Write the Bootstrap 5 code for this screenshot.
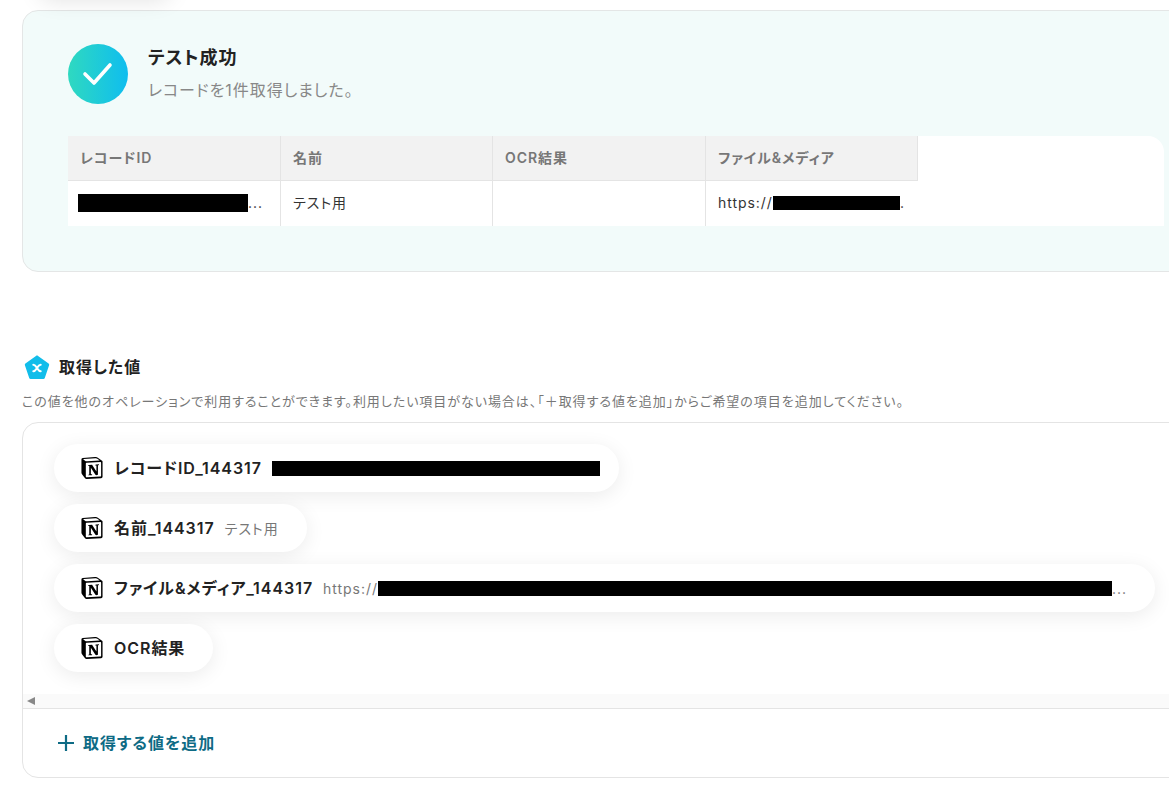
<!DOCTYPE html>
<html lang="ja">
<head>
<meta charset="utf-8">
<title>テスト成功</title>
<link href="https://cdn.jsdelivr.net/npm/bootstrap@5.3.0/dist/css/bootstrap.min.css" rel="stylesheet">
<style>
html,body{height:788px;overflow:hidden;background:#fff}
body{font-family:Inter,"Noto Sans CJK JP",sans-serif;color:#222;position:relative;font-feature-settings:"palt";letter-spacing:.06em}
.page-wrap{width:1230px;padding:10px 0 0 22px}
.top-glow{position:absolute;left:40px;top:-30px;width:130px;height:24px;border-radius:12px;box-shadow:0 4px 24px rgba(0,0,0,.14)}
.result-panel{height:262px;background:#f2fbfa;border:1px solid #e4e6e6;border-radius:16px;padding:33px 45px 0}
.check-disc{width:60px;height:60px;border-radius:50%;background:linear-gradient(90deg,#2fd9c0,#0fbdef);flex:none}
.res-title{font-size:18px;font-weight:600;line-height:28px;margin:0}
.res-sub{font-size:16px;line-height:24px;color:#888;margin:6px 0 0}
.head-gap{gap:20px;margin-bottom:32px;height:60px}
.tbl-wrap{width:1096px;height:90px;background:#fff;border-top-right-radius:16px}
.rec-table{display:grid;grid-template-columns:213px 212px 213px 212px;width:850px}
.rec-th,.rec-td{font-size:14px;padding:0 12px 2px;display:flex;align-items:center;white-space:nowrap;overflow:hidden;border-right:1px solid #e4e4e4}
.rec-th:last-of-type,.rec-td:last-of-type{border-right:0}
.rec-th{height:45px;background:#f2f2f2;color:#777;font-weight:600;border-bottom:1px solid #e4e4e4}
.rec-td{height:45px;color:#333}
.rec-td.first{padding-left:10px}
.redact{display:inline-block;background:#000;flex:none}
.r1{width:170px;height:18px}
.r2{width:127px;height:14px}
.r3{width:328px;height:15px;margin-right:-9px}
.r4{width:734px;height:15px}
.sec-head{margin-top:82px;height:26px;gap:9px;padding-left:2px}
.sec-title{font-size:16px;font-weight:600;line-height:26px}
.sec-desc{font-size:13px;line-height:18px;color:#777;margin:12px 0 12px;white-space:nowrap}
.value-card{height:356px;border:1px solid #e4e4e4;border-radius:16px;display:flex;flex-direction:column}
.chip-area{height:271px;padding:21px 0 0 31px;display:flex;flex-direction:column;align-items:flex-start;gap:12px}
.val-chip{height:48px;border-radius:24px;background:#fff;box-shadow:0 4px 20px rgba(0,0,0,.08);padding:0 28px 0 27px;display:flex;align-items:center;white-space:nowrap}
.val-chip svg{width:22px;height:22px;flex:none;margin-right:11px}
.chip-name{font-size:16px;font-weight:600;color:#222}
.chip-val{font-size:14px;color:#777;margin-left:10px;display:flex;align-items:center}
.scroll-strip{height:14px;background:#fafafa;display:flex;align-items:center;padding-left:4px}
.scroll-arrow{width:0;height:0;border-style:solid;border-width:4.5px 8px 4.5px 0;border-color:transparent #888 transparent transparent}
.add-row{flex:1;border-top:1px solid #e4e4e4;display:flex;align-items:center;padding-left:35px;gap:9px;color:#0e6b85;font-size:16px;font-weight:600}
</style>
</head>
<body>
<div class="top-glow"></div>
<div class="page-wrap">
  <section class="result-panel">
    <div class="d-flex align-items-start head-gap">
      <div class="check-disc d-flex align-items-center justify-content-center">
        <svg width="32" height="26" viewBox="0 0 32 26" fill="none"><path d="M3 13l9 9L28 4" stroke="#fff" stroke-width="3.6" stroke-linecap="round" stroke-linejoin="round"/></svg>
      </div>
      <div>
        <p class="res-title">テスト成功</p>
        <p class="res-sub">レコードを1件取得しました。</p>
      </div>
    </div>
    <div class="tbl-wrap">
      <div class="rec-table">
        <div class="rec-th">レコードID</div>
        <div class="rec-th">名前</div>
        <div class="rec-th">OCR結果</div>
        <div class="rec-th">ファイル&amp;メディア</div>
        <div class="rec-td first"><span class="redact r1"></span>...</div>
        <div class="rec-td">テスト用</div>
        <div class="rec-td"></div>
        <div class="rec-td">https://<span class="redact r2"></span>.</div>
      </div>
    </div>
  </section>

  <div class="d-flex align-items-center sec-head">
    <svg width="26" height="26" viewBox="0 0 26 26"><path d="M13 1.2 24.6 9.6a1.5 1.5 0 0 1 .5 1.7l-4.3 12.6a1.5 1.5 0 0 1-1.4 1H6.600a1.500 1.500 0 0 1-1.400-1L.9 11.300a1.500 1.500 0 0 1 .5-1.700L13 1.200z" fill="#12bdea"/><path d="M9.300 10.800c1.800 0 2.300 1.200 3.700 3.200s1.900 3.200 3.700 3.200M16.700 10.800c-1.800 0-2.300 1.200-3.700 3.200s-1.900 3.200-3.700 3.200" fill="none" stroke="#fff" stroke-width="2" stroke-linecap="round"/></svg>
    <span class="sec-title">取得した値</span>
  </div>
  <p class="sec-desc">この値を他のオペレーションで利用することができます。利用したい項目がない場合は、「＋取得する値を追加」からご希望の項目を追加してください。</p>

  <section class="value-card">
    <div class="chip-area">
      <div class="val-chip"><svg viewBox="0 0 24 24"><use href="#nt"/></svg><span class="chip-name">レコードID_144317</span><span class="chip-val"><span class="redact r3"></span></span></div>
      <div class="val-chip"><svg viewBox="0 0 24 24"><use href="#nt"/></svg><span class="chip-name">名前_144317</span><span class="chip-val">テスト用</span></div>
      <div class="val-chip"><svg viewBox="0 0 24 24"><use href="#nt"/></svg><span class="chip-name">ファイル&amp;メディア_144317</span><span class="chip-val">https://<span class="redact r4"></span>...</span></div>
      <div class="val-chip"><svg viewBox="0 0 24 24"><use href="#nt"/></svg><span class="chip-name">OCR結果</span></div>
    </div>
    <div class="scroll-strip"><span class="scroll-arrow"></span></div>
    <div class="add-row">
      <svg width="16" height="16" viewBox="0 0 16 16"><path d="M8 0v16M0 8h16" stroke="#0e6b85" stroke-width="2.200"/></svg>
      <span>取得する値を追加</span>
    </div>
  </section>
</div>
<svg width="0" height="0" class="d-block"><defs><path id="nt" fill="#000" d="M4.459 4.208c.746.606 1.026.56 2.428.466l13.215-.793c.28 0 .047-.28-.046-.326L17.860 1.968c-.42-.326-.981-.7-2.055-.607L3.010 2.295c-.466.046-.56.28-.374.466zm.793 3.080v13.904c0 .747.373 1.027 1.214.98l14.523-.84c.841-.046.935-.56.935-1.167V6.354c0-.606-.233-.933-.748-.887l-15.177.887c-.56.047-.747.327-.747.933zm14.337.745c.093.42 0 .84-.42.888l-.7.14v10.264c-.608.327-1.168.514-1.635.514-.748 0-.935-.234-1.495-.933l-4.577-7.186v6.952L12.210 19s0 .84-1.168.84l-3.222.186c-.093-.186 0-.653.327-.746l.84-.233V9.854L7.822 9.760c-.094-.42.14-1.026.793-1.073l3.456-.233 4.764 7.279v-6.440l-1.215-.139c-.093-.514.28-.887.747-.933zM1.936 1.035l13.310-.98c1.634-.14 2.055-.047 3.082.7l4.249 2.986c.7.513.934.653.934 1.213v16.378c0 1.026-.373 1.634-1.680 1.726l-15.458.934c-.98.047-1.448-.093-1.962-.747l-3.129-4.060c-.56-.747-.793-1.306-.793-1.960V2.667c0-.839.374-1.540 1.447-1.632z"/></defs></svg>
<script src="https://cdn.jsdelivr.net/npm/bootstrap@5.3.0/dist/js/bootstrap.bundle.min.js"></script>
</body>
</html>
